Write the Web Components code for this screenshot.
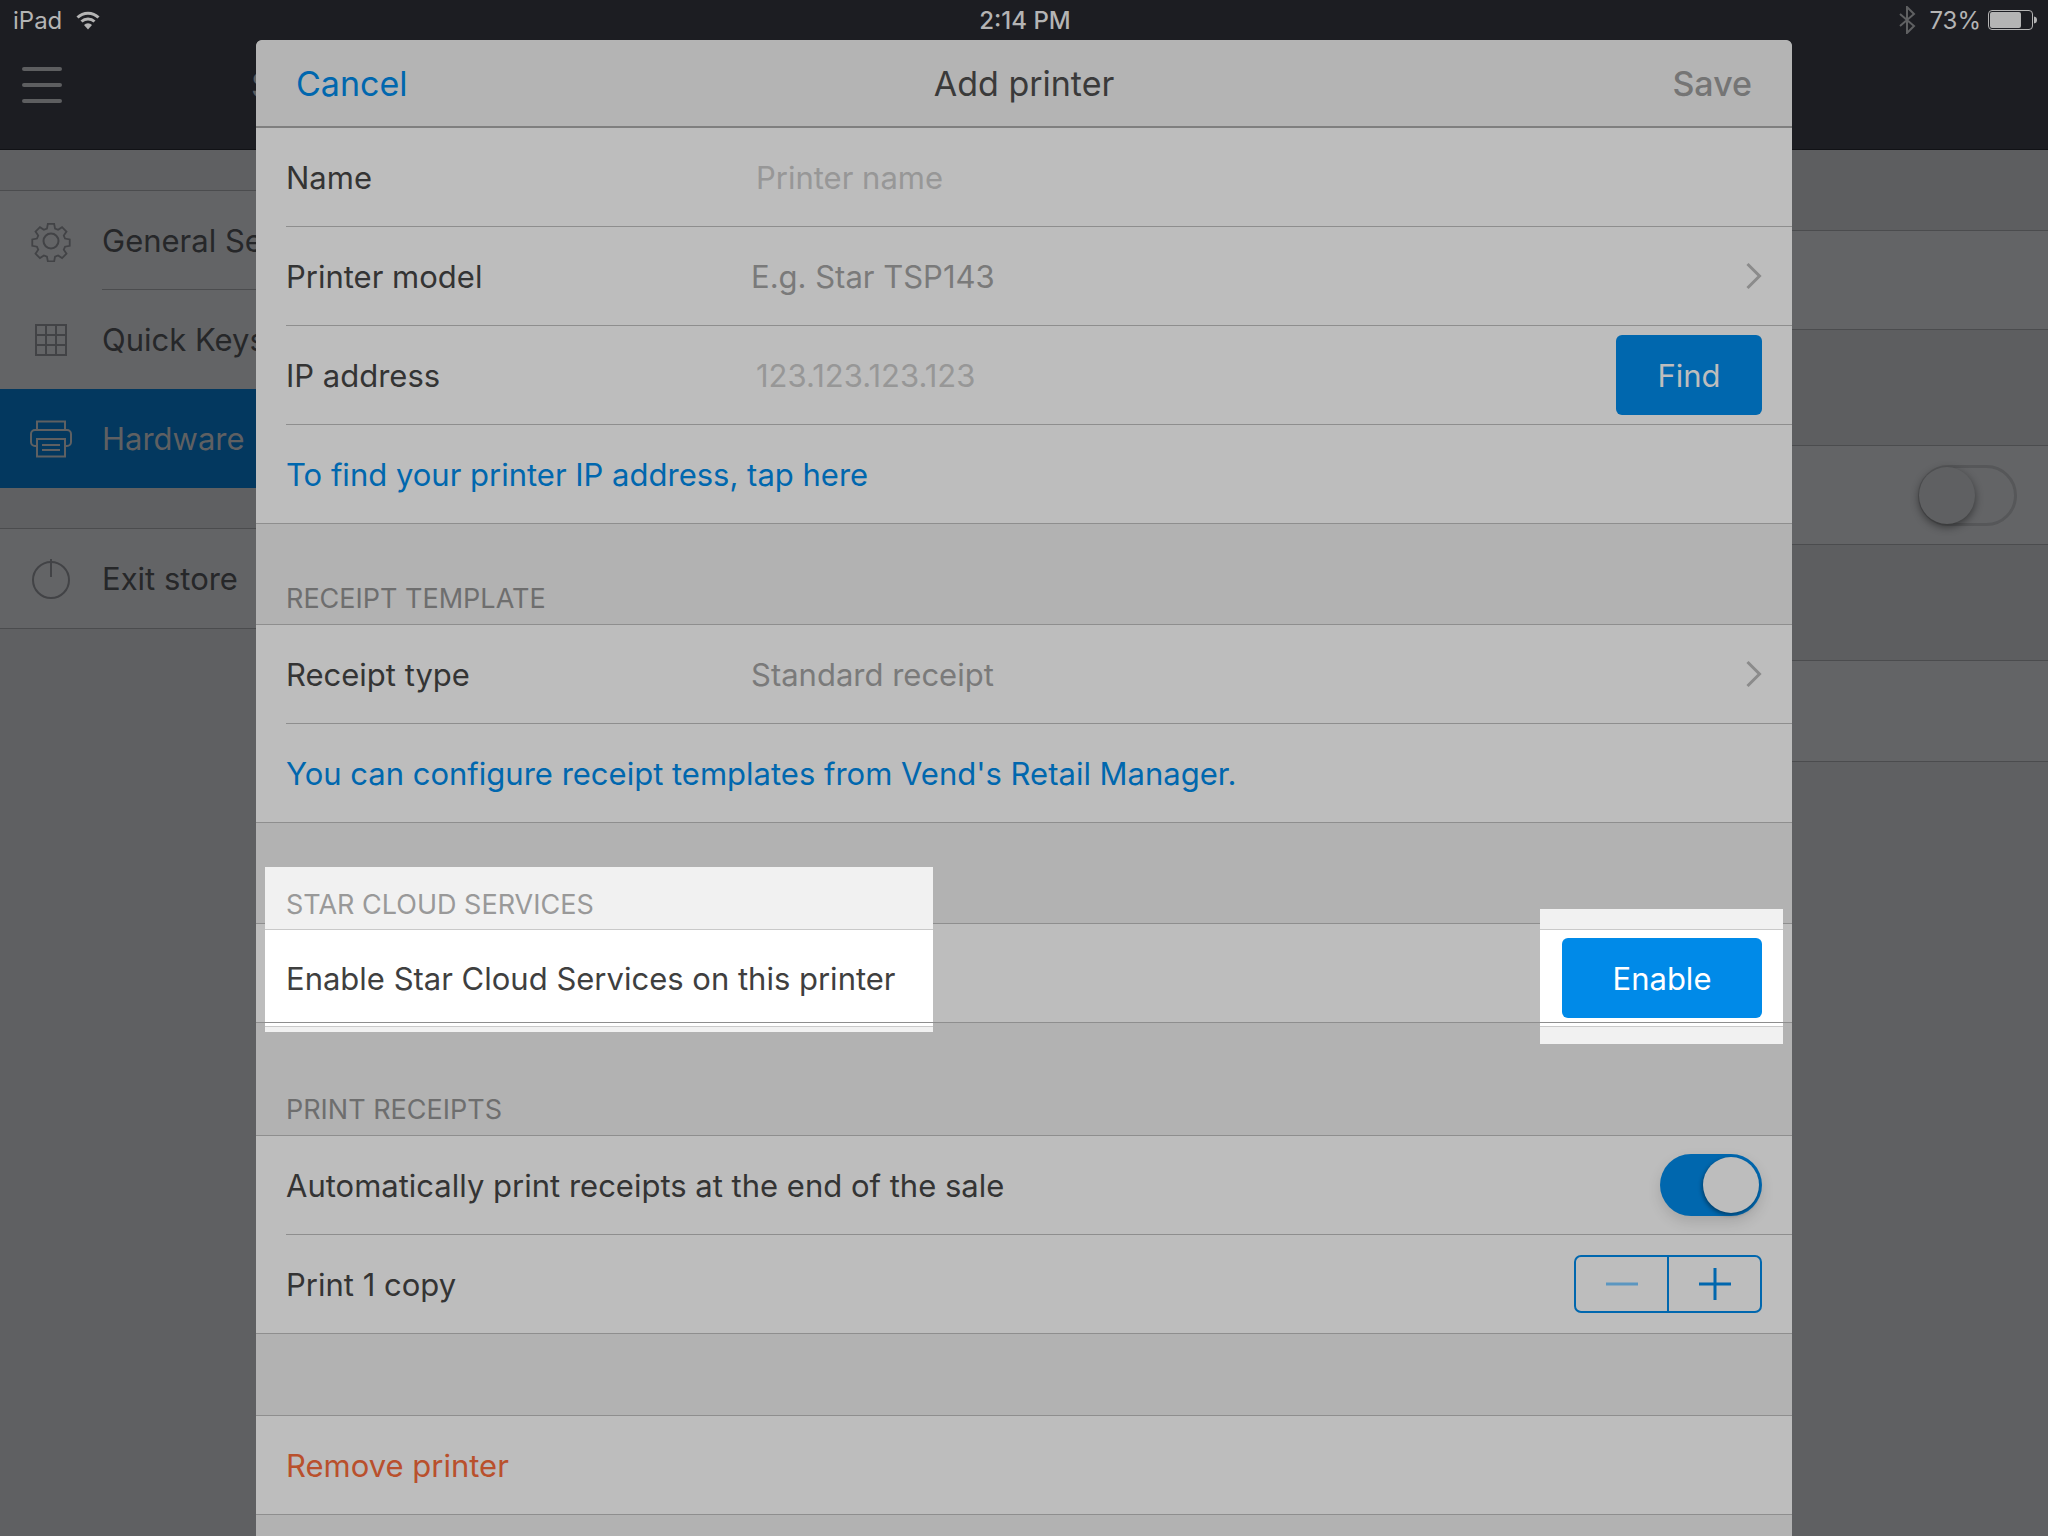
<!DOCTYPE html>
<html>
<head>
<meta charset="utf-8">
<title>Add printer</title>
<style>
  html, body { margin: 0; height: 100%; background: #5f6062; overflow: hidden; }
  body { font-family: "Inter", "Liberation Sans", sans-serif; font-size: 31px; }
</style>
</head>
<body>
<app-shell>
  <status-bar slot="status"></status-bar>
  <top-bar slot="top">Settings</top-bar>
  <side-nav slot="side"></side-nav>
  <settings-panel slot="main"></settings-panel>
  <printer-sheet slot="sheet"></printer-sheet>
</app-shell>

<script>
const FONT = '"Inter", "Liberation Sans", sans-serif';

class AppShell extends HTMLElement {
	constructor() {
		super();
		this.attachShadow({ mode: 'open' });
		this.shadowRoot.innerHTML = `
      <style>
        :host { display: grid; grid-template-columns: 370px 1fr; grid-template-rows: 40px 110px 1fr; width: 2048px; height: 1536px; position: relative; overflow: hidden; }
        .status { grid-column: 1 / 3; }
        .top { grid-column: 1 / 3; }
        .sheet { position: absolute; left: 256px; top: 40px; }
      </style>
      <div class="status"><slot name="status"></slot></div>
      <div class="top"><slot name="top"></slot></div>
      <slot name="side"></slot>
      <slot name="main"></slot>
      <div class="sheet"><slot name="sheet"></slot></div>
    `;
	}
}

class StatusBar extends HTMLElement {
	constructor() {
		super();
		this.attachShadow({ mode: 'open' });
		this.shadowRoot.innerHTML = `
      <style>
        :host { display: grid; grid-template-columns: 1fr auto 1fr; align-items: center; height: 40px; background: #1c1d22; color: #b4b4b4; font: 24px ${FONT}; padding: 0 11px 0 13px; box-sizing: border-box; }
        .left { display: flex; align-items: center; gap: 14px; }
        .right { display: flex; align-items: center; justify-content: flex-end; gap: 7px; }
        .time { font-weight: 500; }
        .bt { margin-right: 6px; }
      </style>
      <div class="left">
        <span>iPad</span>
        <svg width="24" height="20" viewBox="0 0 24 20" fill="none" stroke="#b4b4b4" stroke-width="3">
          <path d="M1.5 7.5a15 15 0 0 1 21 0"/>
          <path d="M5.5 11.5a9.5 9.5 0 0 1 13 0"/>
          <path d="M12 19.5l-4-4.5a5.6 5.6 0 0 1 8 0z" fill="#b4b4b4" stroke="none"/>
        </svg>
      </div>
      <span class="time">2:14 PM</span>
      <div class="right">
        <svg class="bt" width="17" height="28" viewBox="0 0 17 28" fill="none" stroke="#5f6062" stroke-width="2">
          <path d="M1 8l14 12-7 7V1l7 7L1 20"/>
        </svg>
        <span>73%</span>
        <svg width="49" height="20" viewBox="0 0 49 20">
          <rect x=".5" y=".5" width="44" height="19" rx="3.5" fill="none" stroke="#b4b4b4"/>
          <rect x="2" y="2" width="31" height="16" rx="2" fill="#b4b4b4"/>
          <path d="M46 6.5c2 .3 3 1.500 3 3.500s-1 3.200-3 3.500z" fill="#b4b4b4"/>
        </svg>
      </div>
    `;
	}
}

class TopBar extends HTMLElement {
	constructor() {
		super();
		this.attachShadow({ mode: 'open' });
		this.shadowRoot.innerHTML = `
      <style>
        :host { display: flex; align-items: center; gap: 189px; height: 110px; box-sizing: border-box; padding: 0 0 20px 22px; background: #1c1d22; border-bottom: 1px solid #111216; color: #5d5e60; font: 34px ${FONT}; }
        .burger { display: flex; flex-direction: column; gap: 12px; width: 40px; }
        .burger i { display: block; height: 4px; background: #5d5e60; border-radius: 2px; }
      </style>
      <div class="burger"><i></i><i></i><i></i></div>
      <slot></slot>
    `;
	}
}

class SideItem extends HTMLElement {
	constructor() {
		super();
		this.attachShadow({ mode: 'open' });
		this.shadowRoot.innerHTML = `
      <style>
        :host { display: flex; align-items: center; height: 99px; color: #262729; font: 31px ${FONT}; box-sizing: border-box; }
        :host([active]) { background: #03385f; color: #5f6062; }
        .icon { width: 102px; display: flex; justify-content: center; padding-right: 0; flex: none; }
        .text { flex: 1; height: 100%; display: flex; align-items: center; white-space: nowrap; box-sizing: border-box; }
        :host([line]) .text { border-bottom: 1px solid #4b4c4e; }
      </style>
      <div class="icon"><slot name="icon"></slot></div>
      <div class="text"><slot></slot></div>
    `;
	}
}

class SideNav extends HTMLElement {
	constructor() {
		super();
		this.attachShadow({ mode: 'open' });
		this.shadowRoot.innerHTML = `
      <style>
        :host { display: block; background: #5f6062; }
        .top { height: 40px; }
        .group { background: #636466; border-top: 1px solid #4b4c4e; }
        .group.last { margin-top: 40px; border-bottom: 1px solid #4b4c4e; }
        svg { display: block; fill: none; stroke: #424346; stroke-width: 2; }
        .hw { stroke: #5f6062; }
      </style>
      <div class="top"></div>
      <div class="group">
        <side-item line>
          <svg slot="icon" width="42" height="42" viewBox="0 0 42 42">
            <path d="M17.500 2h7l1 5.200 3.400 1.400 4.400-3 4.900 4.900-3 4.400 1.400 3.400 5.200 1v7l-5.200 1-1.400 3.400 3 4.400-4.900 4.900-4.400-3-3.400 1.400-1 5.200h-7l-1-5.200-3.400-1.400-4.400 3-4.900-4.900 3-4.400-1.400-3.400-5.200-1v-7l5.200-1 1.400-3.400-3-4.400 4.900-4.900 4.400 3 3.400-1.400z" transform="translate(2.100 2.100) scale(.9)"/>
            <circle cx="21" cy="21" r="7.500"/>
          </svg>
          General Settings
        </side-item>
        <side-item>
          <svg slot="icon" width="34" height="34" viewBox="0 0 34 34">
            <path d="M2 2h30v30H2zM12 2v30M22 2v30M2 12h30M2 22h30"/>
          </svg>
          Quick Keys
        </side-item>
        <side-item active>
          <svg slot="icon" class="hw" width="42" height="38" viewBox="0 0 42 38">
            <path d="M7 10V1.500h28V10M7 26H5a4 4 0 0 1-4-4V14a4 4 0 0 1 4-4h32a4 4 0 0 1 4 4v8a4 4 0 0 1-4 4h-2"/>
            <path d="M7 19h28v17.500H7zM12 25h18M12 30h18"/>
          </svg>
          Hardware
        </side-item>
      </div>
      <div class="group last">
        <side-item>
          <svg slot="icon" width="40" height="40" viewBox="0 0 40 40">
            <path d="M13 5.500a18 18 0 1 0 14 0" stroke-opacity="0"/>
            <circle cx="20" cy="21" r="18"/>
            <path d="M20 0v18" stroke="#424346"/>
          </svg>
          Exit store
        </side-item>
      </div>
    `;
	}
}

class SettingsPanel extends HTMLElement {
	constructor() {
		super();
		this.attachShadow({ mode: 'open' });
		this.shadowRoot.innerHTML = `
      <style>
        :host { display: flex; flex-direction: column; background: #5f6062; }
        .gap { background: #5d5e60; border-bottom: 1px solid #4b4c4e; }
        .row { background: #636466; border-bottom: 1px solid #4b4c4e; display: flex; align-items: center; justify-content: flex-end; padding-right: 31px; }
        .switch { width: 99px; height: 61px; box-sizing: border-box; border: 3px solid #565759; border-radius: 31px; position: relative; }
        .switch i { position: absolute; left: -2px; top: -1px; width: 56px; height: 57px; border-radius: 50%; background: #5f6062; box-shadow: 0 3px 8px rgba(0,0,0,.45); }
      </style>
      <div class="gap" style="height:80px"></div>
      <div class="row" style="height:98px"></div>
      <div class="gap" style="height:115px"></div>
      <div class="row" style="height:98px"><div class="switch"><i></i></div></div>
      <div class="gap" style="height:115px"></div>
      <div class="row" style="height:100px"></div>
    `;
	}
}

class SheetHeader extends HTMLElement {
	constructor() {
		super();
		this.attachShadow({ mode: 'open' });
		this.shadowRoot.innerHTML = `
      <style>
        :host { display: grid; grid-template-columns: 1fr auto 1fr; align-items: center; height: 88px; box-sizing: border-box; padding: 0 40px 0 40px; background: #b4b4b4; border-bottom: 2px solid #7f7f7f; border-radius: 6px 6px 0 0; font: 34px ${FONT}; color: #3a3a3a; }
        .cancel { color: #0067ae; }
        .save { color: #757575; font-weight: 500; justify-self: end; }
      </style>
      <span class="cancel">Cancel</span>
      <span>Add printer</span>
      <span class="save">Save</span>
    `;
	}
}

class FormRow extends HTMLElement {
	constructor() {
		super();
		this.attachShadow({ mode: 'open' });
		this.shadowRoot.innerHTML = `
      <style>
        :host { display: block; background: #bdbdbd; position: relative; }
        .in { display: flex; align-items: center; height: 99px; margin-left: 30px; padding-right: 30px; box-sizing: border-box; border-bottom: 1px solid #8e8e8e; color: #343434; position: relative; z-index: 1; }
        :host([end]) .in { margin-left: 0; padding-left: 30px; }
        .label { flex: none; width: var(--label, 470px); white-space: nowrap; }
        .value { flex: 1; color: #7a7a7a; white-space: nowrap; }
        ::slotted([slot=ctl]) { flex: none; }
      </style>
      <div class="in">
        <div class="label"><slot></slot></div>
        <div class="value"><slot name="value"></slot></div>
        <slot name="ctl"></slot>
      </div>
    `;
	}
}

class SectionHead extends HTMLElement {
	constructor() {
		super();
		this.attachShadow({ mode: 'open' });
		this.shadowRoot.innerHTML = `
      <style>
        :host { display: flex; align-items: flex-end; background: #b2b2b2; box-sizing: border-box; padding: 0 0 9px 30px; border-bottom: 1px solid #8e8e8e; color: #6e6e6e; font-size: 27px; height: var(--h, 101px); position: relative; }
        span { position: relative; z-index: 1; }
      </style>
      <span><slot></slot></span>
    `;
	}
}

class SolidButton extends HTMLElement {
	constructor() {
		super();
		this.attachShadow({ mode: 'open' });
		this.shadowRoot.innerHTML = `
      <style>
        :host { display: flex; align-items: center; justify-content: center; height: 80px; border-radius: 6px; background: #0067ae; color: #bdbdbd; font-size: 31px; }
        :host([bright]) { background: #008ae8; color: #fff; }
      </style>
      <slot></slot>
    `;
	}
}

class ChevronMark extends HTMLElement {
	constructor() {
		super();
		this.attachShadow({ mode: 'open' });
		this.shadowRoot.innerHTML = `
      <style>:host { display: block; width: 16px; height: 28px; } svg { display: block; }</style>
      <svg width="16" height="28" viewBox="0 0 16 28" fill="none" stroke="#8b8b8b" stroke-width="3"><path d="M1.500 2l12 12-12 12"/></svg>
    `;
	}
}

class ToggleSwitch extends HTMLElement {
	constructor() {
		super();
		this.attachShadow({ mode: 'open' });
		this.shadowRoot.innerHTML = `
      <style>
        :host { display: block; width: 102px; height: 62px; border-radius: 31px; background: #0067ae; position: relative; box-shadow: 0 6px 14px rgba(0,0,0,.12); }
        i { position: absolute; right: 3px; top: 3px; width: 56px; height: 56px; border-radius: 50%; background: #bdbdbd; box-shadow: -1px 2px 4px rgba(0,0,0,.4); }
      </style>
      <i></i>
    `;
	}
}

class CopyStepper extends HTMLElement {
	constructor() {
		super();
		this.attachShadow({ mode: 'open' });
		this.shadowRoot.innerHTML = `
      <style>
        :host { display: flex; width: 188px; height: 58px; box-sizing: border-box; border: 2px solid #0067ae; border-radius: 7px; }
        div { flex: 1; display: flex; align-items: center; justify-content: center; }
        div + div { border-left: 2px solid #0067ae; }
        svg { display: block; }
      </style>
      <div><svg width="32" height="32" viewBox="0 0 32 32"><path d="M0 16h32" stroke="#5b96c0" stroke-width="3"/></svg></div>
      <div><svg width="32" height="32" viewBox="0 0 32 32"><path d="M0 16h32M16 0v32" stroke="#0067ae" stroke-width="3"/></svg></div>
    `;
	}
}

class PrinterSheet extends HTMLElement {
	constructor() {
		super();
		this.attachShadow({ mode: 'open' });
		this.shadowRoot.innerHTML = `
      <style>
        :host { display: block; width: 1536px; height: 1496px; background: #b2b2b2; position: relative; border-radius: 6px 6px 0 0; font: 31px ${FONT}; overflow: hidden; }
        .ph { color: #979797; }
        .blue { color: #0067ae; }
        .red { color: #b9502c; }
        .find { width: 146px; }
        .enable { width: 200px; }
        .spacer { height: 81px; background: #b2b2b2; border-bottom: 1px solid #8e8e8e; }
        .spot { position: absolute; z-index: 0; background: #fff; box-sizing: border-box; }
        .band { position: absolute; left: 0; right: 0; background: #f1f1f1; }
        .band.a { top: 0; border-bottom: 1px solid #c9c9c9; }
        .band.b { bottom: 0; border-top: 1px solid #c9c9c9; }
        .over { position: absolute; z-index: 2; left: 30px; white-space: nowrap; }
      </style>
      <sheet-header></sheet-header>
      <form-row><span>Name</span><span slot="value" class="ph">Printer name</span></form-row>
      <form-row>Printer model<span slot="value" style="margin-left:-5px">E.g. Star TSP143</span><chevron-mark slot="ctl"></chevron-mark></form-row>
      <form-row>IP address<span slot="value" class="ph">123.123.123.123</span><solid-button slot="ctl" class="find">Find</solid-button></form-row>
      <form-row end><span class="blue">To find your printer IP address, tap here</span></form-row>
      <section-head>RECEIPT TEMPLATE</section-head>
      <form-row>Receipt type<span slot="value" style="margin-left:-5px">Standard receipt</span><chevron-mark slot="ctl"></chevron-mark></form-row>
      <form-row end><span class="blue" style="display:inline-block">You can configure receipt templates from Vend's Retail Manager.</span></form-row>
      <section-head></section-head>
      <form-row end></form-row>
      <section-head style="--h:113px">PRINT RECEIPTS</section-head>
      <form-row>Automatically print receipts at the end of the sale<toggle-switch slot="ctl"></toggle-switch></form-row>
      <form-row end>Print 1 copy<copy-stepper slot="ctl"></copy-stepper></form-row>
      <div class="spacer"></div>
      <form-row end><span class="red">Remove printer</span></form-row>

      <div class="spot" style="left:9px;top:827px;width:668px;height:165px"><div class="band a" style="height:62px"></div><div class="band b" style="height:5px"></div></div>
      <div class="spot" style="left:1284px;top:869px;width:243px;height:135px"><div class="band a" style="height:20px"></div><div class="band b" style="height:17px"></div></div>
      <div class="over" style="top:848px;color:#999;font-size:27px">STAR CLOUD SERVICES</div>
      <div class="over" style="top:920px;color:#3f3f3f">Enable Star Cloud Services on this printer</div>
      <solid-button bright class="enable" style="position:absolute;z-index:2;left:1306px;top:898px">Enable</solid-button>
    `;
	}
}

customElements.define('app-shell', AppShell);
customElements.define('status-bar', StatusBar);
customElements.define('top-bar', TopBar);
customElements.define('side-item', SideItem);
customElements.define('side-nav', SideNav);
customElements.define('settings-panel', SettingsPanel);
customElements.define('sheet-header', SheetHeader);
customElements.define('form-row', FormRow);
customElements.define('section-head', SectionHead);
customElements.define('solid-button', SolidButton);
customElements.define('chevron-mark', ChevronMark);
customElements.define('toggle-switch', ToggleSwitch);
customElements.define('copy-stepper', CopyStepper);
customElements.define('printer-sheet', PrinterSheet);
</script>
</body>
</html>
